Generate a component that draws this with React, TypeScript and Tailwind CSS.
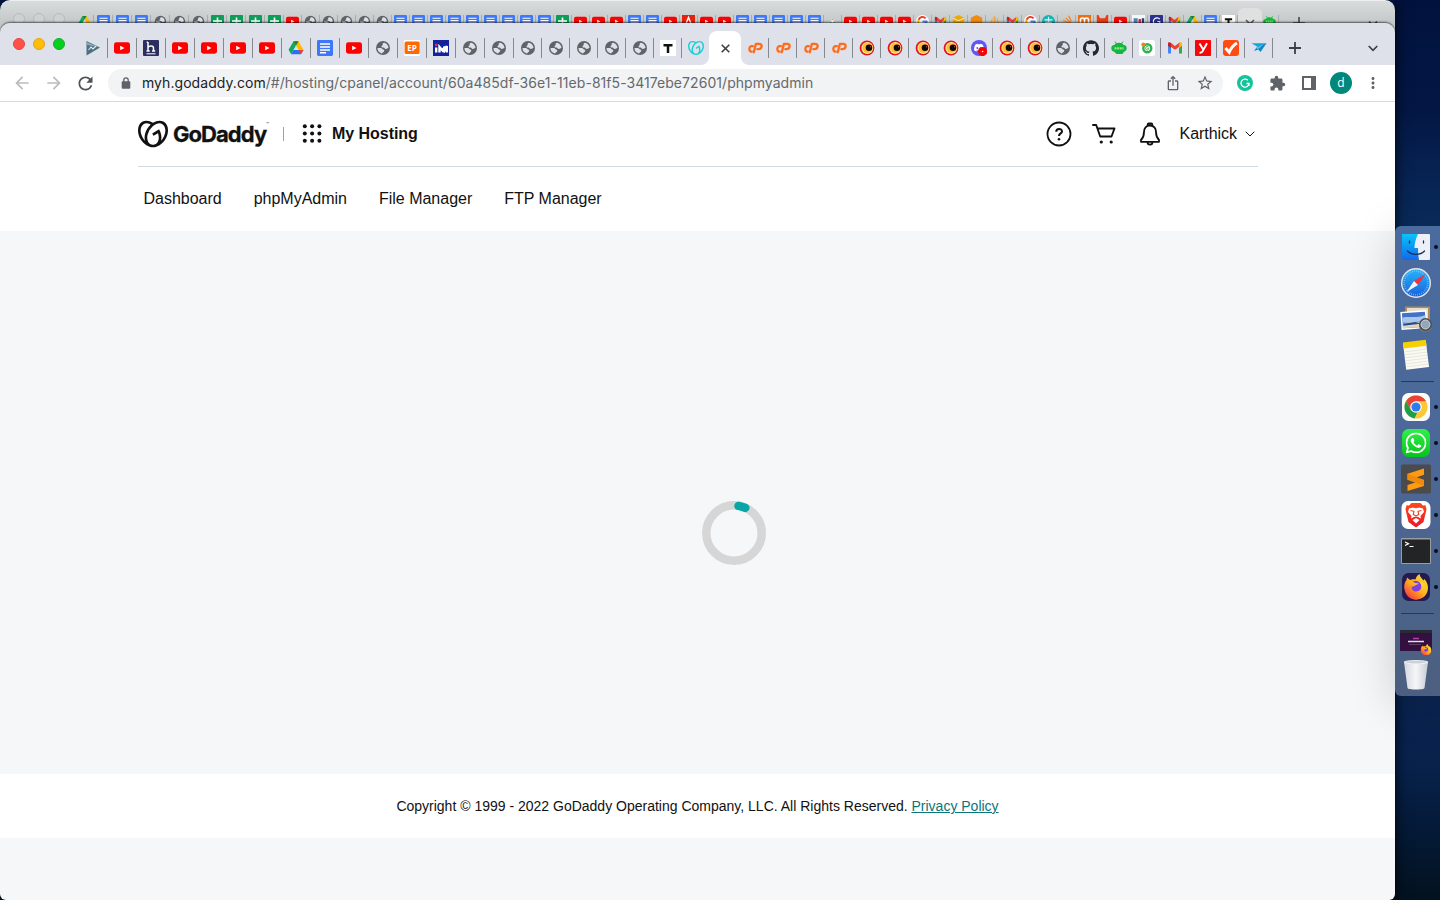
import type { ReactNode } from "react";
import { MdArrowBack, MdArrowForward, MdRefresh, MdOutlineIosShare, MdStarBorder, MdExtension, MdMoreVert } from "react-icons/md";
import { SiGodaddy, SiGithub, SiWhatsapp, SiDiscord } from "react-icons/si";

type Kind =
  | "play" | "yt" | "h" | "drive" | "doc" | "globe" | "ep" | "im" | "t" | "gd" | "cp" | "eye" | "disc"
  | "github" | "bot" | "gcam" | "gmail" | "y" | "check" | "bird" | "sheet" | "a" | "mount" | "g" | "box"
  | "hex" | "bars" | "teal" | "so" | "moodle" | "mred" | "misc" | "c";

const shapes: Record<Kind, ReactNode> = {
  play: (
    <>
      <path d="M1.5 1 15 7.5 1.5 15.5z" fill="#4d7080" />
      <path d="M2 2 15 7.5 2 5z" fill="#86a5b0" />
      <path d="m3.5 10 2.5-3 2 2 3-3" stroke="#d9f0f6" strokeWidth="1.1" fill="none" />
    </>
  ),
  yt: (
    <>
      <rect y="2.3" width="16" height="11.4" rx="2.4" fill="#f00" />
      <path d="M6.2 5.8v4.5L10.5 8z" fill="#fff" />
    </>
  ),
  h: (
    <>
      <rect width="16" height="16" rx="1" fill="#2d2e5f" />
      <path d="M5 2v9M5 7.5c1-1.8 5.5-2.2 5.5.7V11M3.7 2.3H5M3.5 11h3.2M9 11h3.2" stroke="#fff" strokeWidth="1.5" fill="none" />
      <path d="M3.5 13.8h9" stroke="#fff" strokeWidth="1" />
    </>
  ),
  drive: (
    <>
      <path d="M5.500 1.300h5L8 5.800 3.200 14.200.600 9.800z" fill="#0da960" />
      <path d="M5.500 1.300h5l5 8.600h-5z" fill="#ffba00" />
      <path d="M5.500 1.300h5L8 5.600z" fill="#11813f" />
      <path d="M5.500 9.900h10l-2.600 4.400H3z" fill="#2d6ff6" />
      <path d="m10.500 9.900h5l-2.600 4.400z" fill="#ea4335" />
      <path d="M8 5.600 5.500 9.900h5z" fill="#dee1e9" />
    </>
  ),
  doc: (
    <>
      <rect width="16" height="16" rx="1.4" fill="#3c78f8" />
      <path d="M3 4h10M3 7h10M3 10h10M3 12.8h6" stroke="#fff" strokeWidth="1.5" />
    </>
  ),
  sheet: (
    <>
      <rect width="16" height="16" rx="1" fill="#0c9d58" />
      <path d="M2.5 7.500h11M8 3v10M3 11h10" stroke="#fff" strokeWidth="2" />
    </>
  ),
  globe: (
    <>
      <circle cx="8" cy="8" r="7" fill="#5f6368" />
      <path d="M9.300 2.700c-1.600.2-2 1-1.600 1.900.4.800-1 .9-1.200 1.900-.1.900.9 1 1.900.9 1.200 0 1.200 1.300 2.200 1.500 1.200.3 1.700-.9 2.900-.8C13.400 5.500 11.800 3.300 9.300 2.700z" fill="#dee1e9" />
      <path d="M2.500 8h3.400c1.300 0 1.300 1.400 2.300 1.600 1 .3 1.400 1 .8 1.900-.5.800-1.500.7-1.700 1.900C4.500 13.200 2.400 10.800 2.500 8z" fill="#dee1e9" />
    </>
  ),
  ep: (
    <>
      <rect width="16" height="16" rx="1" fill="#fff" />
      <rect x=".6" y="1.5" width="15" height="12.5" rx="1.5" fill="#ff6a00" />
      <text x="8" y="10.7" textAnchor="middle" fontSize="8" fontWeight="700" fill="#fff" fontFamily="Open Sans, sans-serif">EP</text>
    </>
  ),
  im: (
    <>
      <rect width="16" height="16" fill="#12239c" />
      <path d="M3.200 7.500v5M6.500 12.500V7l3 3.500L12 6.500M10.500 12.500l3.300-6.500v6.500" stroke="#fff" strokeWidth="2.400" fill="none" />
      <circle cx="3.200" cy="4.900" r="1.400" fill="#f3274b" />
    </>
  ),
  t: (
    <>
      <rect width="16" height="16" fill="#fff" />
      <path d="M3.5 5.200h9M8 5v8" stroke="#111" strokeWidth="2.500" />
    </>
  ),
  gd: <SiGodaddy x="0" y="0" size={16} color="#1bcfd6" />,
  cp: (
    <g fill="none" stroke="#ff6c1c" strokeWidth="2.300" strokeLinejoin="round" strokeLinecap="round">
      <path d="M5.900 6.200H4.200a2.400 2.900 0 0 0-.6 5.400h1.200" />
      <path d="M6.800 12.300 8.900 3.900h3.300c3.900 0 2.900 5.300-.9 5.300h-1" />
    </g>
  ),
  eye: (
    <>
      <circle cx="8" cy="8" r="7.400" fill="#e4131f" />
      <circle cx="8.300" cy="8" r="5.900" fill="#fff0a0" />
      <circle cx="8.500" cy="8" r="5" fill="#ffbe28" />
      <circle cx="10" cy="7.700" r="3.300" fill="#12060a" />
      <circle cx="11.500" cy="6.700" r=".7" fill="#a55" />
    </>
  ),
  disc: (
    <>
      <circle cx="8" cy="8" r="8" fill="#5f57f5" />
      <SiDiscord x="3" y="2.600" size={10} color="#fff" />
      <circle cx="11.600" cy="11.500" r="4.600" fill="#f20505" />
      <circle cx="11.600" cy="11.500" r=".8" fill="#fff" />
    </>
  ),
  github: <SiGithub x="0" y="0" size={16} color="#24292f" />,
  bot: (
    <>
      <path d="M3.500 5C4 2 12 2 12.500 5c2.500 0 3.200 1.500 3.200 3.300s-1 3.200-2.700 3.400L11.500 14h-6l-2.300-2.300C1.500 11.500.300 10.300.300 8.300S1 5 3.500 5z" fill="#17b53a" />
      <path d="M3.500 8.300h9" stroke="#8ee89f" strokeWidth="2.200" strokeDasharray="2 .6" />
      <path d="m4 1.500 1.500 2M12 1.500l-1.500 2" stroke="#17b53a" />
    </>
  ),
  gcam: (
    <>
      <rect width="16" height="16" rx="2.500" fill="#fff" />
      <circle cx="8.300" cy="8.300" r="4" fill="none" stroke="#2fb24c" strokeWidth="2.400" />
      <path d="M10 8.300H8.300M9.500 9.700a1.800 1.800 0 1 1 0-2.800" stroke="#2fb24c" fill="none" />
      <circle cx="4.300" cy="4.500" r="2" fill="#f58220" />
    </>
  ),
  gmail: (
    <>
      <path d="M1 4v9.500h3V7z" fill="#4285f4" />
      <path d="M12 7v6.500h3V4z" fill="#34a853" />
      <path d="M2.500 3.700 8 8l5.500-4.300" stroke="#ea4335" strokeWidth="3" fill="none" strokeLinejoin="round" />
      <path d="M12 5v3l3-2.300V3.500c0-1-1-1.500-2-1z" fill="#fbbc04" />
      <path d="M1 3.500c0-1 1-1.500 2-1l1 1V8L1 5.700z" fill="#c5221f" />
    </>
  ),
  y: (
    <>
      <rect width="16" height="16" rx=".8" fill="#f40808" />
      <path d="m4.500 3.500 3.700 6M12 3.200 8.300 10c-.8 2-2 3-3.800 2.600" stroke="#fff" strokeWidth="1.900" fill="none" />
    </>
  ),
  check: (
    <>
      <rect width="16" height="16" rx="3" fill="#ff4a11" />
      <path d="m2.500 8 3.700 4.200C8 8 10.500 5 14 3" stroke="#fff" strokeWidth="3" fill="none" />
    </>
  ),
  bird: (
    <>
      <path d="M.500 3.200H15.500L8.500 8z" fill="#0fa5e0" />
      <path d="M15.500 3.200 9.500 12 7.300 9.500 3 11l2.500-3.500z" fill="#1086c3" />
      <path d="m5 8 8-4-6 5z" fill="#5cd0f6" />
    </>
  ),
  a: (
    <>
      <rect width="16" height="16" fill="#e8210c" />
      <path d="m4 13 4-10 4 10" stroke="#fff" strokeWidth="1.800" fill="none" />
    </>
  ),
  mount: (
    <>
      <path d="m1 12 7-8 7 8z" fill="#e6d9b8" />
      <path d="m4 11 4-6 4 6z" fill="#3598a8" />
      <circle cx="8" cy="8" r="1.800" fill="#fff" />
    </>
  ),
  g: (
    <>
      <circle cx="8" cy="8" r="8" fill="#fff" />
      <path d="M3.200 6a5 5 0 0 1 8.600-1.800" stroke="#ea4335" strokeWidth="2.500" fill="none" />
      <path d="M3.200 6a5 5 0 0 0 0 4" stroke="#fbbc04" strokeWidth="2.500" fill="none" />
      <path d="M3.500 10.500a5 5 0 0 0 9.500-2.500H8" stroke="#4285f4" strokeWidth="2.500" fill="none" />
    </>
  ),
  box: (
    <>
      <path d="m8 0 7 3.500v9L8 16l-7-3.500v-9z" fill="#e9a90c" />
      <path d="m1 4 7 3 7-3" stroke="#f8e6a8" fill="none" strokeWidth="1.300" />
    </>
  ),
  hex: <path d="m8 0 7 3.500v9L8 16l-7-3.500v-9z" fill="#f18a13" />,
  bars: <path d="m1 14 4.500-11v11M7 14V1l2.500 2v11M11 14V2l4.500 12" fill="#f5a33a" />,
  teal: (
    <>
      <circle cx="8" cy="8" r="8" fill="#12b3b5" />
      <path d="M3 6h10M8 2v10M4 9h8" stroke="#d9f5f4" strokeWidth="1.500" />
    </>
  ),
  so: <path d="m3 10 8 2M4 6.500l8 4M7 3.500l6 6M10.500 1l3.500 7" stroke="#f4842a" strokeWidth="1.600" />,
  moodle: (
    <>
      <rect width="16" height="16" fill="#ef6f10" />
      <path d="M3 13V6c0-3 5-3 5 0v7M8 6c0-3 5-3 5 0v7" stroke="#fff" strokeWidth="2" fill="none" />
    </>
  ),
  mred: <path d="M1 0h2l2 4h6l2-4h2v14H1z" fill="#ea3a16" />,
  misc: (
    <>
      <rect width="16" height="16" fill="#f4f6f8" />
      <path d="M2 4h5v7H2z" fill="#5085b0" />
      <path d="M8 5h3v6H8z" fill="#d8263a" />
      <path d="M12 4h3v7h-3z" fill="#233f80" />
    </>
  ),
  c: (
    <>
      <rect width="16" height="16" rx="1" fill="#2b2f8f" />
      <path d="M12 5a4.500 4.500 0 1 0 0 6V8H9" stroke="#fff" strokeWidth="1.500" fill="none" />
    </>
  ),
};

function Favicon({ kind, size }: { kind: Kind; size: number }) {
  return (
    <svg width={size} height={size} viewBox="0 0 16 16" className="shrink-0">
      {shapes[kind]}
    </svg>
  );
}

const wideTabs: Kind[] = ["play", "yt", "h", "yt", "yt", "yt", "yt", "drive", "doc", "yt", "globe", "ep", "im", "globe", "globe"];
const midTabs: Kind[] = ["globe", "globe", "globe", "globe", "globe", "t"];
const rightTabs: Kind[] = [
  "cp", "cp", "cp", "cp", "eye", "eye", "eye", "eye", "disc", "eye", "eye", "globe", "github", "bot", "gcam", "gmail", "y", "check", "bird",
];

const backWide: Kind[] = ["drive", "doc", "doc", "doc", "globe", "globe", "globe", "sheet", "sheet", "sheet", "sheet"];
const backNarrow: Kind[] = [
  "yt", "globe", "globe", "globe", "globe", "globe", "doc", "doc", "doc", "doc", "doc", "doc", "doc", "doc", "doc", "sheet",
  "yt", "yt", "yt", "doc", "doc", "yt", "a", "yt", "yt", "doc", "doc", "doc", "doc", "doc", "mount", "yt", "yt", "yt", "yt",
  "g", "gmail", "box", "hex", "bars", "gmail", "g", "teal", "so", "moodle", "mred", "yt", "misc", "c", "gmail", "drive", "doc", "t",
];

function Tab({ kind, wide }: { kind: Kind; wide?: boolean }) {
  return (
    <div className={wide ? "flex w-[29px] shrink-0 items-center pl-1.5" : "flex w-7 shrink-0 items-center pl-1.5"}>
      <Favicon kind={kind} size={16} />
      <div className="ml-auto h-5 w-px bg-[#85888d]" />
    </div>
  );
}

function BackTab({ kind, wide }: { kind: Kind; wide?: boolean }) {
  return (
    <div className={wide ? "flex w-[19px] shrink-0 pl-[3px]" : "flex w-[18px] shrink-0 pl-[2px]"}>
      <Favicon kind={kind} size={13} />
      <div className="ml-auto h-4 w-px bg-[#a9adaf]" />
    </div>
  );
}

function BackWindow() {
  return (
    <div className="flex h-[35px] overflow-hidden rounded-t-[10px] border-t border-[#eceeef] bg-gradient-to-b from-[#d8dcdd] from-0% to-[#c3c8c9] to-65% pt-3.5">
      <div className="flex w-[75px] gap-2 pl-[13px]">
        <div className="-mt-0.5 size-3 rounded-full border border-[#b8bbbc] bg-[#cfd2d2]" />
        <div className="-mt-0.5 size-3 rounded-full border border-[#b8bbbc] bg-[#cfd2d2]" />
        <div className="-mt-0.5 size-3 rounded-full border border-[#b8bbbc] bg-[#cfd2d2]" />
      </div>
      {backWide.map((k, i) => <BackTab key={i} kind={k} wide />)}
      {backNarrow.map((k, i) => <BackTab key={i} kind={k} />)}
      <div className="-mt-[7px] flex w-6 shrink-0 justify-center rounded-t-md bg-[#dfe1e1] pt-[11px]">
        <svg width="10" height="10" viewBox="0 0 10 10" stroke="#55585b" strokeWidth="1.500"><path d="m1 1 8 8M9 1 1 9" /></svg>
      </div>
      <div className="flex w-[17px] shrink-0 pl-px">
        <Favicon kind="bot" size={13} />
        <div className="ml-auto h-4 w-px bg-[#a9adaf]" />
      </div>
      <svg width="12" height="12" viewBox="0 0 12 12" stroke="#45484b" strokeWidth="1.600" className="ml-3.5 mt-0.5"><path d="M6 0v12M0 6h12" /></svg>
      <svg width="10" height="8" viewBox="0 0 10 8" fill="none" stroke="#45484b" strokeWidth="1.700" className="ml-auto mr-[17px] mt-[5px]"><path d="m1 1.500 4 4 4-4" /></svg>
    </div>
  );
}

function TabStrip() {
  return (
    <div className="flex h-[42px] items-stretch bg-[#dee1e9] pt-2">
      <div className="-mt-2 flex w-[79px] shrink-0 items-center gap-2 pl-[13px]">
        <div className="size-3 rounded-full border border-[#e2463f] bg-[#ff5148]" />
        <div className="size-3 rounded-full border border-[#e0a516] bg-[#ffbd08]" />
        <div className="size-3 rounded-full border border-[#14ae24] bg-[#06cf22]" />
      </div>
      {wideTabs.map((k, i) => <Tab key={i} kind={k} wide />)}
      {midTabs.map((k, i) => <Tab key={i} kind={k} />)}
      <div className="flex w-[27px] shrink-0 items-center bg-[#dee1e9] pl-1.5">
        <Favicon kind="gd" size={16} />
      </div>
      <div className="flex shrink-0">
        <div className="-ml-2 w-2 self-end bg-white"><div className="h-2 rounded-br-lg bg-[#dee1e9]" /></div>
        <div className="flex w-8 items-center justify-center rounded-t-lg bg-white">
          <svg width="9" height="9" viewBox="0 0 9 9" stroke="#3c4043" strokeWidth="1.600"><path d="m.7.700 7.600 7.600M8.300.700.700 8.300" /></svg>
        </div>
        <div className="-mr-2 w-2 self-end bg-white"><div className="h-2 rounded-bl-lg bg-[#dee1e9]" /></div>
      </div>
      {rightTabs.map((k, i) => <Tab key={i} kind={k} />)}
      <div className="flex flex-1 items-center justify-between pl-4 pr-[17px]">
        <svg width="12" height="12" viewBox="0 0 12 12" stroke="#3c4043" strokeWidth="1.800"><path d="M6 0v12M0 6h12" /></svg>
        <svg width="10" height="7" viewBox="0 0 10 7" fill="none" stroke="#3c4043" strokeWidth="1.700"><path d="m.7 1 4.300 4.300L9.300 1" /></svg>
      </div>
    </div>
  );
}

function Toolbar() {
  return (
    <div className="box-content flex h-9 items-center border-b border-[#d9dbdf] bg-white">
      <div className="flex w-[108px] items-center pl-3">
        <MdArrowBack size={20} color="#babcbe" />
        <MdArrowForward size={20} color="#babcbe" className="ml-3" />
        <MdRefresh size={21} color="#4f5357" className="ml-[11px]" />
      </div>
      <div className="flex h-7 w-[1115px] items-center rounded-full bg-[#f1f3f4] pr-[9px]">
        <svg width="10" height="12" viewBox="0 0 10 12" className="ml-[13px]">
          <rect x=".7" y="4.300" width="8.600" height="7.400" rx="1" fill="#5f6368" />
          <path d="M2.800 5V3a2.200 2.200 0 0 1 4.400 0v2" fill="none" stroke="#5f6368" strokeWidth="1.300" />
        </svg>
        <div className="ml-[11px] whitespace-nowrap font-['Inter',sans-serif] text-[14px] leading-7 tracking-[0.055px] text-[#65696d]">
          <span className="text-[#202124]">myh.godaddy.com</span>/#/hosting/cpanel/account/60a485df-36e1-11eb-81f5-3417ebe72601/phpmyadmin
        </div>
        <MdOutlineIosShare size={16} color="#5f6368" className="ml-auto" />
        <MdStarBorder size={18} color="#5f6368" className="ml-[15px]" />
      </div>
      <div className="ml-3.5 flex size-4 items-center justify-center rounded-full bg-[#15c39a]">
        <svg width="10" height="10" viewBox="0 0 10 10" fill="none" stroke="#fff" strokeWidth="1.300"><path d="M7.800 2.200A4 4 0 1 0 9 5.500H6.500M9 5.300V8" /></svg>
      </div>
      <MdExtension size={17} color="#5f6368" className="ml-4" />
      <svg width="14" height="14" viewBox="0 0 14 14" className="ml-4"><path d="M1 1h12v12H1z" fill="none" stroke="#5f6368" strokeWidth="2" /><path d="M9 1h5v12H9z" fill="#5f6368" /></svg>
      <div className="ml-3.5 flex size-[22px] items-center justify-center rounded-full bg-[#00897b] font-['Open_Sans',sans-serif] text-xs text-white">d</div>
      <MdMoreVert size={18} color="#5f6368" className="ml-3" />
    </div>
  );
}

function Header() {
  return (
    <header className="bg-white px-[138px] text-[#111]">
      <div className="-mr-px flex h-[65px] items-center border-b border-[#d0dae2]">
        <SiGodaddy size={30} />
        <div className="ml-[5px] w-[95px] whitespace-nowrap font-['Inter',sans-serif] text-[22px] font-bold leading-none tracking-[-0.950px] [-webkit-text-stroke:0.3px_#111]">
          GoDaddy<span className="align-top text-[4px] tracking-normal [-webkit-text-stroke:0]">™</span>
        </div>
        <div className="ml-[15px] h-3.5 w-px bg-[#a0a0a0]" />
        <svg width="20" height="20" viewBox="0 0 20 20" fill="#111" className="ml-[18px]">
          {[2.6, 9.9, 17.2].map((y) => [2.8, 10.1, 17.4].map((x) => <circle key={`${x}-${y}`} cx={x} cy={y - 0.4} r="2" />))}
        </svg>
        <div className="ml-2.5 text-base font-bold tracking-[-0.040px]">My Hosting</div>
        <svg width="26" height="26" viewBox="0 0 26 26" fill="none" stroke="#111" strokeWidth="2" className="ml-auto">
          <circle cx="13" cy="13" r="11.500" strokeWidth="1.800" />
          <path d="M10.200 10.700c0-3.800 5.800-3.600 5.800-.3 0 2.100-3 2-3 4.600" />
          <circle cx="13" cy="18.200" r="1.300" fill="#111" stroke="none" />
        </svg>
        <svg width="24" height="22" viewBox="0 0 24 22" fill="none" stroke="#111" strokeWidth="1.900" strokeLinejoin="round" strokeLinecap="round" className="ml-5">
          <path d="M1 2h3.200l4 11.500h11.300L22.500 5.500H5.800" />
          <circle cx="9.300" cy="19" r="1.600" fill="#111" stroke="none" />
          <circle cx="19.200" cy="19" r="1.600" fill="#111" stroke="none" />
        </svg>
        <svg width="22" height="26" viewBox="0 0 22 26" fill="none" stroke="#111" strokeWidth="1.800" strokeLinejoin="round" className="ml-[23px]">
          <path d="M8.700 4.800V3.500q0-1 1-1h2.600q1 0 1 1v1.300M11 4.500c-3.900 0-6 2.800-6 6.500 0 4.500-1 6-3 8v1.800h18V19c-2-2-3-3.500-3-8 0-3.700-2.100-6.500-6-6.500zM8.500 21c0 3.500 5 3.500 5 0" />
        </svg>
        <div className="ml-[19px] text-base tracking-[-0.050px]">Karthick</div>
        <svg width="10" height="6" viewBox="0 0 10 6" fill="none" stroke="#111" className="ml-2 mr-[3px]"><path d="m.7.700 4.300 4.300L9.300.700" /></svg>
      </div>
      <nav className="flex h-16 items-center gap-8 pl-[5.5px] text-base tracking-[-0.010px]">
        <a>Dashboard</a>
        <a>phpMyAdmin</a>
        <a>File Manager</a>
        <a>FTP Manager</a>
      </nav>
    </header>
  );
}

function Spinner() {
  return (
    <svg width="64" height="64" viewBox="0 0 64 64" fill="none" strokeWidth="8.500">
      <circle cx="32" cy="32" r="27.700" stroke="#d6d6d6" />
      <path d="M36.500 4.900A27.700 27.700 0 0 1 43.300 6.900" stroke="#09a6a8" strokeLinecap="round" strokeWidth="8.500" />
    </svg>
  );
}

function DockItem({ children, running }: { children: ReactNode; running?: boolean }) {
  return (
    <div className="flex h-9 items-center pl-[5px]">
      <svg width="32" height="32" viewBox="0 0 32 32" className="shrink-0">{children}</svg>
      {running && <div className="ml-[2px] size-1 shrink-0 rounded-full bg-[#070f22]" />}
    </div>
  );
}

function DockRule() {
  return (
    <div className="flex h-4 items-center pl-1.5"><div className="h-px w-[33px] bg-[#243a63]" /></div>
  );
}

function FirefoxShapes() {
  return (
    <>
      <path d="M4.500 17C4 13 5 11 6.500 9l.5-2.500L10 9c2-1 4-1 5.500-.5C16 6 17.500 4 19.500 3c.5 3 2 4 4 6.500l1-1.500c3 4 4 7 3.300 11C26.500 25 22 28.500 16 28.500S5 24 4.500 17z" fill="url(#ff-flame)" />
      <circle cx="15.500" cy="16" r="6.200" fill="#8040e0" />
      <path d="M4.500 17c0-5 2-7 5-7.500 2 0 3.500 1 5.500 2.500l4 .5c-1.500 1.500-3.500 1-4.500 2.500l-3 1c.5 3.500 2 4.500 4.500 4.500 4 0 6-3 5-7l-2-3.500c6 1.500 8 6 6.500 11-2 5-6 7.500-10 7.500S5 24 4.500 17z" fill="url(#ff-body)" />
    </>
  );
}

function Dock() {
  return (
    <div className="w-[45px] rounded-l-md bg-gradient-to-b from-[#4a6b9f] via-[#4b6897] to-[#4c5f80] py-[3px] shadow-[0_8px_46px_rgba(0,0,0,0.18)]">
      <svg width="0" height="0" className="absolute">
        <defs>
          <linearGradient id="finder" x2="0" y2="1"><stop stopColor="#08c4fa" /><stop offset="1" stopColor="#1468ea" /></linearGradient>
          <linearGradient id="safari" x2="0" y2="1"><stop stopColor="#26b3fb" /><stop offset="1" stopColor="#1b62dd" /></linearGradient>
          <linearGradient id="wa" x2="0" y2="1"><stop stopColor="#31f04a" /><stop offset="1" stopColor="#07c31c" /></linearGradient>
          <linearGradient id="brave" x2="0" y2="1"><stop stopColor="#ff4a19" /><stop offset="1" stopColor="#e8162b" /></linearGradient>
          <linearGradient id="ff-flame" x1="1" x2="0" y2="1"><stop stopColor="#ffe226" /><stop offset=".5" stopColor="#ffb01f" /><stop offset="1" stopColor="#f2216d" /></linearGradient>
          <linearGradient id="ff-body" x1="1" x2="0" y2="1"><stop stopColor="#fff03a" /><stop offset=".45" stopColor="#ffa51c" /><stop offset=".8" stopColor="#ff4a3a" /><stop offset="1" stopColor="#ee2380" /></linearGradient>
          <linearGradient id="trash"><stop stopColor="#d3d7dc" /><stop offset=".5" stopColor="#f5f6f8" /><stop offset="1" stopColor="#c7ccd3" /></linearGradient>
        </defs>
      </svg>
      <DockItem running>
        <rect x="2" y="3" width="28" height="26" rx="1" fill="#edf1f7" />
        <path d="M2 3h16c-2.500 5-3.500 10-3.500 14H18c0 5 .5 9 1 12H2z" fill="url(#finder)" />
        <path d="M9.500 10v2M23.500 10v2M7.500 20c4 4.500 13 4.500 17 0" stroke="#16305a" strokeWidth="1.300" fill="none" strokeLinecap="round" />
      </DockItem>
      <DockItem>
        <circle cx="16" cy="16" r="15" fill="#e4e8ec" />
        <circle cx="16" cy="16" r="13.600" fill="url(#safari)" />
        <circle cx="16" cy="16" r="11.800" fill="none" stroke="#8fd0fb" strokeWidth="1.600" strokeDasharray=".6 1.460" />
        <path d="M25.500 7 14 14l4 4z" fill="#f4303a" />
        <path d="m6.500 25 7.500-11 4 4z" fill="#f4f6f8" />
      </DockItem>
      <DockItem>
        <path d="M5 3.500h25v17H5z" fill="#b08a58" />
        <path d="M7 5h21v14H7z" fill="#e8ded0" />
        <g transform="rotate(-4 14 18)">
          <path d="M1 8h26v18H1z" fill="#fff" />
          <path d="M2.500 9.500h23v15h-23z" fill="#4272c4" />
          <path d="M2.500 14c5-2 12 2 23-1v6h-23z" fill="#a8c7ee" />
          <path d="M2.500 20c8-3 15 1 23-2v6.500h-23z" fill="#ddd5bd" />
          <path d="m3 20 12-1 7 2-19 1z" fill="#264c94" />
        </g>
        <path d="M19.500 21h12v5c-3 4-9 4-12 0z" fill="#7d7468" />
        <circle cx="25.500" cy="21.500" r="5.600" fill="#93a7bb" stroke="#4a4e55" strokeWidth="1.800" />
        <circle cx="25.500" cy="21.500" r="4.500" fill="none" stroke="#d3d7dc" strokeWidth=".8" />
      </DockItem>
      <DockItem>
        <g transform="rotate(-7 16 16)">
          <path d="M4.500 3h23v26.500h-23z" fill="#fbfaf2" />
          <path d="M4.500 2h23v6h-23z" fill="#f8d000" />
          <path d="M5 11.500h22M5 14.500h22M5 17.500h22M5 20.500h22M5 23.500h22M5 26.500h22" stroke="#dededa" strokeWidth=".7" />
        </g>
      </DockItem>
      <DockRule />
      <DockItem running>
        <rect x="2" y="2" width="28" height="28" rx="6.500" fill="#fbfbfb" />
        <circle cx="16" cy="16" r="11.500" fill="#fcc934" />
        <path d="M6 10.300A11.500 11.500 0 0 1 26 10.300H16l-5 8.500z" fill="#ea4335" />
        <path d="M6 10.300 11 19l6.500 2-3 6.400A11.500 11.500 0 0 1 6 10.300z" fill="#1e9e4a" />
        <circle cx="16" cy="16" r="5.800" fill="#fff" />
        <circle cx="16" cy="16" r="4.600" fill="#2c7cf0" />
      </DockItem>
      <DockItem running>
        <rect x="2" y="2" width="28" height="28" rx="6.500" fill="url(#wa)" />
        <SiWhatsapp x="5.500" y="5.500" size={21} color="#fff" />
      </DockItem>
      <DockItem running>
        <rect x="1" y="1.500" width="30" height="29" rx="2" fill="#4b4b4b" />
        <path d="M7.500 10.800 24 5.500v6.300l-8 2.700 8 2.500v6L7.500 28v-6l8.500-2.800-8.500-2.500z" fill="#ff9b12" />
        <path d="m7.500 16.700 0-5.900 16.500 6.200v6z" fill="#f08a08" />
      </DockItem>
      <DockItem running>
        <rect x="1.500" y="2" width="29" height="28" rx="6.500" fill="#fff" />
        <path d="M11.500 4h9l2.500 2.500 2.500-.2 1 3.700-.6 3L23.500 23 16 28.500 8.500 23 6.100 13l-.6-3 1-3.700 2.500.200z" fill="url(#brave)" />
        <path d="m9 9.500 4-1 3 .8 3-.8 4 1 1 3.500-3.500 4 .5 2.500-3-1.500-2-.5-2 .5-3 1.500.5-2.500L8 13z" fill="#fff" />
        <path d="m10.500 11.500 3.500.8-.8 3.200L16 17l2.800-1.500-.8-3.200 3.500-.8" stroke="#f03a22" strokeWidth="1.100" fill="none" />
        <path d="m12.500 21 3.500-2 3.500 2-3.500 3.500z" fill="#fff" />
      </DockItem>
      <DockItem running>
        <rect x="1" y="3" width="30" height="26" rx="1" fill="#9a9da0" />
        <rect x="2" y="4.500" width="28" height="23.500" fill="#222425" />
        <path d="m5 7 3.500 1.700L5 10.500M9.500 11.500h4" stroke="#fff" strokeWidth="1.200" fill="none" />
      </DockItem>
      <DockItem running>
        <rect x="2" y="2" width="28" height="28" rx="6.500" fill="#241a50" />
        <FirefoxShapes />
      </DockItem>
      <DockRule />
      <DockItem>
        <path d="M0 7h32v21H0z" fill="#33103f" />
        <path d="M0 7h32v3H0z" fill="#272b35" />
        <path d="M8 18.500h16" stroke="#e5dce8" strokeWidth="1.500" />
        <path d="M13 15.500h6" stroke="#b83bb0" strokeWidth="1.500" />
        <path d="M9 21.500h12" stroke="#704f7c" strokeWidth=".7" />
        <svg x="20" y="20.500" width="12" height="12" viewBox="3 2 26 27"><FirefoxShapes /></svg>
      </DockItem>
      <DockItem>
        <path d="m4 3 3.500 26c.2 2 16.800 2 17 0L28 3z" fill="url(#trash)" />
        <ellipse cx="16" cy="3.200" rx="12" ry="1.700" fill="#cdd1d7" stroke="#f3f4f6" strokeWidth=".9" />
      </DockItem>
    </div>
  );
}

export default function App() {
  return (
    <div className="relative flex h-[900px] w-[1440px] overflow-hidden bg-[linear-gradient(180deg,#02123e_0%,#031744_12%,#0a2b5c_25%,#0d2c5c_70%,#0a2450_78%,#08224c_85%,#041a38_92%,#03121f_100%)] font-['Liberation_Sans',sans-serif]">
      <div className="w-[1395px] shadow-[2px_0_12px_rgba(0,0,0,0.6)]">
        <BackWindow />
        <div className="relative -mt-3 flex h-[877px] flex-col overflow-hidden rounded-[10px] rounded-b-[6px] shadow-[0_-1px_2px_rgba(0,0,0,0.6)]">
          <TabStrip />
          <Toolbar />
          <Header />
          <main className="flex h-[543px] items-center justify-center bg-[#f5f7f8] pl-[73px] pt-[61px]">
            <Spinner />
          </main>
          <footer className="flex h-16 items-center justify-center bg-white text-sm text-[#111]">
            <p>
              Copyright © 1999 - 2022 GoDaddy Operating Company, LLC. All Rights Reserved.{" "}
              <a className="text-[#09757a] underline">Privacy Policy</a>
            </p>
          </footer>
          <div className="flex-1 bg-[#f5f7f8]" />
        </div>
      </div>
      <aside className="relative w-[45px] pt-[226px]">
        <Dock />
      </aside>
    </div>
  );
}
